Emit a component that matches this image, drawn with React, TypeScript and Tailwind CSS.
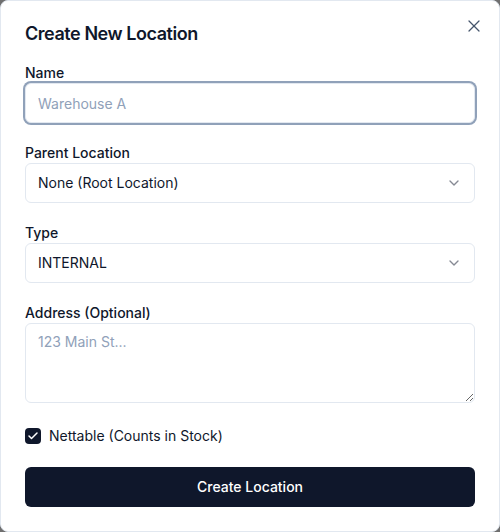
import { ChevronDown, Check, X } from "lucide-react";

function Field({ label, children }: { label: string; children: React.ReactNode }) {
  return (
    <div className="flex flex-col">
      <label className="text-sm leading-5 font-medium text-slate-900">{label}</label>
      {children}
    </div>
  );
}

function SelectBox({ value }: { value: string }) {
  return (
    <div className="h-10 w-full rounded-md border border-slate-200 bg-white px-3 flex items-center justify-between text-sm text-slate-900">
      <span>{value}</span>
      <ChevronDown size={16} className="text-slate-900 opacity-50" />
    </div>
  );
}

export default function App() {
  return (
    <div className="w-[500px] h-[532px] bg-[#6f6f6f]" style={{ fontFamily: "Inter, 'Noto Sans', sans-serif" }}>
      <div className="relative w-[500px] h-[532px] rounded-lg border border-slate-200 bg-white px-6 pt-[19px] pb-6 flex flex-col">
        <button className="absolute right-[15px] top-[15px] text-slate-600">
          <X size={20} strokeWidth={1.5} />
        </button>
        <h2 className="text-lg leading-7 font-semibold text-slate-900 tracking-[-0.025em]">Create New Location</h2>

        <div className="mt-[15px] flex flex-col gap-5">
          <Field label="Name">
            <input
              placeholder="Warehouse A"
              className="h-10 w-full rounded-md border border-slate-200 bg-white px-3 text-sm text-slate-900 placeholder:text-slate-400 ring-2 ring-slate-400 outline-none"
            />
          </Field>
          <Field label="Parent Location">
            <SelectBox value="None (Root Location)" />
          </Field>
          <Field label="Type">
            <SelectBox value="INTERNAL" />
          </Field>
          <Field label="Address (Optional)">
            <textarea
              placeholder="123 Main St..."
              className="h-20 w-full rounded-md border border-slate-200 bg-white px-3 py-2 text-sm text-slate-900 placeholder:text-slate-400 outline-none"
            />
          </Field>
        </div>

        <div className="mt-[23px] flex items-center gap-2 h-5">
          <div className="w-4 h-4 rounded-[4px] bg-slate-900 flex items-center justify-center">
            <Check size={12} strokeWidth={3} className="text-white" />
          </div>
          <span className="text-sm text-slate-900">Nettable (Counts in Stock)</span>
        </div>

        <button className="mt-[21px] h-10 w-full rounded-md bg-slate-900 text-white text-sm font-medium">
          Create Location
        </button>
      </div>
    </div>
  );
}
